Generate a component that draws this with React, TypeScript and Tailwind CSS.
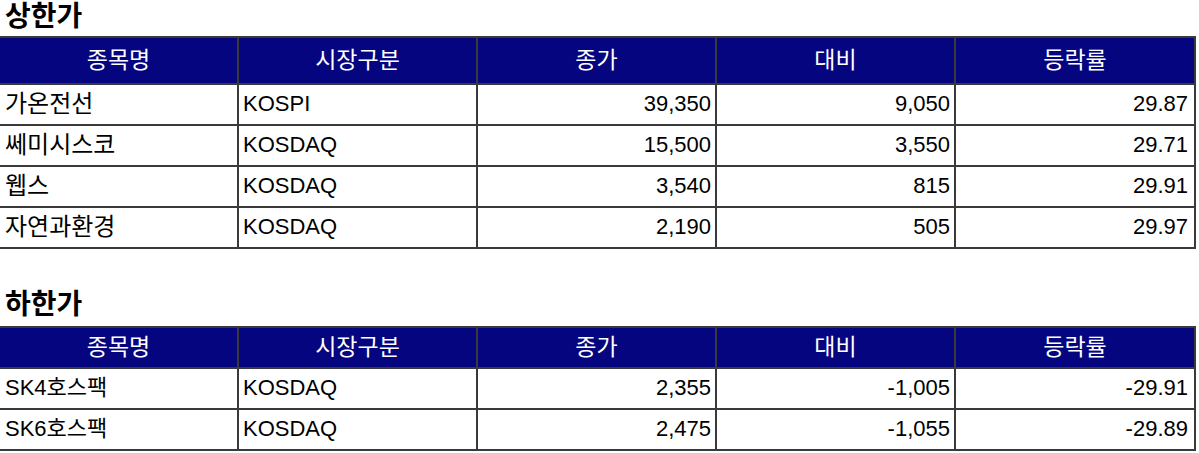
import React from "react";

type Row = [string, string, string, string, string];

const upper: Row[] = [
  ["가온전선", "KOSPI", "39,350", "9,050", "29.87"],
  ["쎄미시스코", "KOSDAQ", "15,500", "3,550", "29.71"],
  ["웹스", "KOSDAQ", "3,540", "815", "29.91"],
  ["자연과환경", "KOSDAQ", "2,190", "505", "29.97"],
];

const lower: Row[] = [
  ["SK4호스팩", "KOSDAQ", "2,355", "-1,005", "-29.91"],
  ["SK6호스팩", "KOSDAQ", "2,475", "-1,055", "-29.89"],
];

const heads = ["종목명", "시장구분", "종가", "대비", "등락률"];

function Table({ rows, headH, wideName }: { rows: Row[]; headH: string; wideName: boolean }) {
  return (
    <table className="table-fixed border-collapse w-[1195px] text-[22px] leading-none">
      <colgroup>
        <col className="w-[238px]" />
        <col className="w-[239px]" />
        <col className="w-[239px]" />
        <col className="w-[239px]" />
        <col className="w-[240px]" />
      </colgroup>
      <thead>
        <tr className={headH}>
          {heads.map((h, i) => (
            <th
              key={h}
              className={`bg-[#05057f] text-white font-normal text-center text-[23px] border-y-2 border-[#3a3a3a] ${
                i === 0 ? "border-r-2" : "border-x-2"
              }`}
            >
              {h}
            </th>
          ))}
        </tr>
      </thead>
      <tbody>
        {rows.map((r) => (
          <tr key={r[0]} className="h-[41px]">
            <td
              className={`border-y-2 border-r-2 border-[#3a3a3a] pl-[5px] pb-[2px] text-left text-black ${
                wideName ? "text-[24px]" : ""
              }`}
            >
              {r[0]}
            </td>
            <td className="border-2 border-[#3a3a3a] pl-[4px] pb-[2px] text-left text-black">{r[1]}</td>
            <td className="border-2 border-[#3a3a3a] pr-[4px] pb-[2px] text-right text-black">{r[2]}</td>
            <td className="border-2 border-[#3a3a3a] pr-[4px] pb-[2px] text-right text-black">{r[3]}</td>
            <td className="border-2 border-[#3a3a3a] pr-[6px] pb-[2px] text-right text-black">{r[4]}</td>
          </tr>
        ))}
      </tbody>
    </table>
  );
}

export default function App() {
  return (
    <div
      className="bg-white w-[1199px] h-[453px] overflow-hidden"
      style={{ fontFamily: '"Liberation Sans", "Noto Sans CJK KR", sans-serif' }}
    >
      <div className="h-[36px] flex items-center pl-[5px] pb-[2px] text-[28px] font-bold text-black">상한가</div>
      <Table rows={upper} headH="h-[47px]" wideName={true} />
      <div className="h-[36px]" />
      <div className="h-[41px] flex items-center pl-[5px] pb-[1px] text-[28px] font-bold text-black">하한가</div>
      <Table rows={lower} headH="h-[41px]" wideName={false} />
    </div>
  );
}
